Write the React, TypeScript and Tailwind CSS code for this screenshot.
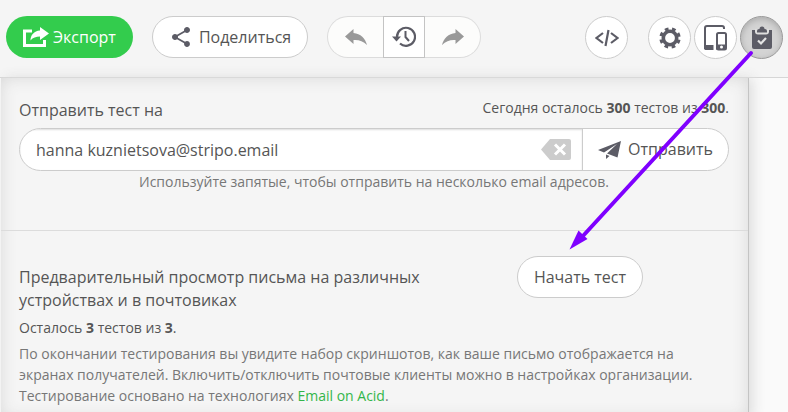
import { useState } from 'react';
import type { ReactNode } from 'react';
import { MdShare } from 'react-icons/md';

const ExportIcon = () => (
  <svg className="h-5 w-[26px] shrink-0" viewBox="0 0 26 20" fill="none">
    <path d="M9 4H1.500v14.500h20V13" stroke="currentColor" strokeWidth="3" />
    <path d="M17 0l9 6.500-9 6.500V9.500c-4 0-7 1-9.500 4C7.500 8 11 4 17 3.500z" fill="currentColor" />
  </svg>
);

const ArrowIcon = ({ className }: { className?: string }) => (
  <svg className={`h-4 w-[22px] ${className ?? ''}`} viewBox="0 0 22 16" fill="currentColor">
    <path d="M8.500 0L0 7.500 8.500 15v-4c5-.5 9.500 1 13.500 5C20.500 9.500 15.500 4.500 8.500 4z" />
  </svg>
);

const HistoryIcon = () => (
  <svg className="h-[22px] w-6" viewBox="0 0 24 22" fill="none" stroke="#5c5c66">
    <path d="M5 11a9 9 0 1 1 3 6.500" strokeWidth="2.200" />
    <path d="M0 10.500h9L4.500 15.500z" fill="#5c5c66" stroke="none" />
    <path d="M13.500 5v6l3.500 4" strokeWidth="2" />
  </svg>
);

const CodeIcon = () => (
  <svg className="h-[18px] w-6" viewBox="0 0 24 18" fill="none" stroke="currentColor" strokeWidth="2.200">
    <path d="M8 4L1.500 9 8 14M16 4l6.500 5L16 14M13.500 1l-3 16" />
  </svg>
);

const GearIcon = () => (
  <svg className="h-[22px] w-[22px]" viewBox="0 0 22 22" fill="none" stroke="currentColor">
    <circle cx="11" cy="11" r="6.700" strokeWidth="3.600" />
    <circle cx="11" cy="11" r="9" strokeWidth="3.400" strokeDasharray="3.600 3.469" strokeDashoffset="-1.730" />
  </svg>
);

const DevicesIcon = () => (
  <svg className="h-[26px] w-6" viewBox="0 0 24 26" fill="none">
    <path d="M20 4V3a2 2 0 0 0-2-2H3a2 2 0 0 0-2 2v21" stroke="currentColor" strokeWidth="2" />
    <path d="M1 20h8.500v5H2.500A2 2 0 0 1 0 23z" fill="currentColor" />
    <rect x="13" y="8" width="9" height="16.500" rx="1.500" stroke="currentColor" strokeWidth="2" />
    <path d="M12 19.500h10v5H12z" fill="currentColor" />
    <circle cx="17.500" cy="22" r="1.500" fill="white" />
  </svg>
);

const ClipboardIcon = () => (
  <svg className="h-6 w-[22px]" viewBox="0 0 22 24" fill="none">
    <path d="M1 4h20v17a2 2 0 0 1-2 2H3a2 2 0 0 1-2-2z" fill="currentColor" />
    <path d="M4 3h14v2.500a3 3 0 0 1-3 3H7a3 3 0 0 1-3-3z" fill="#dedede" />
    <path d="M6 6.500V5a2 2 0 0 1 2-2h.5A2.500 2.500 0 0 1 11 .5 2.500 2.500 0 0 1 13.500 3h.5a2 2 0 0 1 2 2v1.500z" fill="currentColor" />
    <path d="M7 14.500l3 3 5-5.500" stroke="#e4e4e4" strokeWidth="2.200" />
  </svg>
);

const PlaneIcon = () => (
  <svg className="h-[18px] w-6 shrink-0" viewBox="0 0 24 18" fill="currentColor">
    <path d="M23 0L0 9l6 2.500L19 3 9 12.500l10.500 4z" />
    <path d="M8 13.500V18l3.500-3z" />
  </svg>
);

const ClearIcon = () => (
  <svg className="h-[21px] w-[30px]" viewBox="0 0 30 21" fill="none">
    <path d="M9 0h19a2 2 0 0 1 2 2v17a2 2 0 0 1-2 2H9L0 10.500z" fill="#cccccc" />
    <path d="M14 5.500l10 10m0-10l-10 10" stroke="white" strokeWidth="3" />
  </svg>
);

interface RoundButtonProps {
  label: string;
  active?: boolean;
  children: ReactNode;
}

function RoundButton({ label, active, children }: RoundButtonProps) {
  return (
    <button
      type="button"
      aria-label={label}
      className={`flex h-[43px] w-[43px] items-center justify-center rounded-full border ${
        active ? 'border-[#999999] bg-[#d4d4d4] shadow-[inset_0_2px_6px_#aaaaaa]' : 'border-[#cccccc] bg-white'
      }`}
    >
      {children}
    </button>
  );
}

function Toolbar() {
  return (
    <header className="flex items-start justify-between border-b border-[#d6d6d6] bg-[#f5f5f5] pt-4 pr-[5px] pb-[18px] pl-[6px]">
      <div className="flex items-center gap-[19px]">
        <button type="button" className="flex h-[42px] items-center gap-1 rounded-full bg-[#33cc4d] px-[17px] text-white">
          <ExportIcon />
          Экспорт
        </button>
        <button type="button" className="flex h-[42px] items-center gap-[6px] rounded-full border border-[#cccccc] bg-white px-4">
          <MdShare className="h-6 w-6 text-[#5c5c66]" />
          Поделиться
        </button>
        <div className="flex h-[42px]">
          <button type="button" aria-label="Отменить" disabled className="flex w-14 items-center justify-center rounded-l-full border border-r-0 border-[#dcdcdc] bg-[#fcfcfb] text-[#999999]">
            <ArrowIcon />
          </button>
          <button type="button" aria-label="История" className="flex w-[42px] items-center justify-center border border-[#c4c4c4] bg-white">
            <HistoryIcon />
          </button>
          <button type="button" aria-label="Повторить" disabled className="flex w-14 items-center justify-center rounded-r-full border border-l-0 border-[#dcdcdc] bg-[#fcfcfb] text-[#999999]">
            <ArrowIcon className="-scale-x-100" />
          </button>
        </div>
      </div>
      <div className="flex items-center gap-5 text-[#5c5c66]">
        <RoundButton label="Код">
          <CodeIcon />
        </RoundButton>
        <div className="flex gap-[3px]">
          <RoundButton label="Настройки">
            <GearIcon />
          </RoundButton>
          <RoundButton label="Предпросмотр">
            <DevicesIcon />
          </RoundButton>
          <RoundButton label="Тестирование" active>
            <ClipboardIcon />
          </RoundButton>
        </div>
      </div>
    </header>
  );
}

function SendTestForm() {
  const [email, setEmail] = useState('hanna kuznietsova@stripo.email');

  return (
    <form className="border-b border-[#dcdcdc] pt-5 pr-[19px] pb-[37px] pl-[18px]" onSubmit={(e) => e.preventDefault()}>
      <div className="flex items-start justify-between pb-[6px]">
        <label htmlFor="test-email" className="pt-[1px]">Отправить тест на</label>
        <p className="text-sm leading-[20px]">
          Сегодня осталось <b>300</b> тестов из <b>300</b>.
        </p>
      </div>
      <div className="flex h-[43px] overflow-hidden rounded-full border border-[#cccccc] bg-white">
        <div className="flex flex-1 items-center pr-[11px] shadow-[inset_0_1px_2px_#dddddd]">
          <input
            id="test-email"
            value={email}
            onChange={(e) => setEmail(e.target.value)}
            className="h-full min-w-0 flex-1 pl-4 outline-none"
          />
          <button type="button" aria-label="Очистить" onClick={() => setEmail('')}>
            <ClearIcon />
          </button>
        </div>
        <button type="submit" className="flex items-center gap-[6px] border-l border-[#cccccc] px-[15px]">
          <span className="text-[#5c5c66]">
            <PlaneIcon />
          </span>
          Отправить
        </button>
      </div>
      <p className="text-center text-sm leading-[22px] text-[#777777]">
        Используйте запятые, чтобы отправить на несколько email адресов.
      </p>
    </form>
  );
}

function PreviewTest() {
  return (
    <section className="px-[18px] pt-[25px] pb-3">
      <div className="flex items-start justify-between">
        <div className="w-[440px] pt-[10px]">
          <h2>Предварительный просмотр письма на различных устройствах и в почтовиках</h2>
          <p className="pt-[5px] text-sm leading-[22px]">
            Осталось <b>3</b> тестов из <b>3</b>.
          </p>
        </div>
        <button type="button" className="mr-[87px] h-[42px] rounded-full border border-[#cccccc] bg-white px-4">
          Начать тест
        </button>
      </div>
      <p className="pt-1 text-sm leading-[21px] text-[#777777]">
        По окончании тестирования вы увидите набор скриншотов, как ваше письмо отображается на экранах получателей. Включить/отключить почтовые клиенты можно в настройках организации. Тестирование основано на технологиях{' '}
        <a href="#email-on-acid" className="text-[#33b54a]">Email on Acid</a>.
      </p>
    </section>
  );
}

export default function App() {
  return (
    <div className="relative min-h-screen overflow-hidden bg-[#fafafa] font-['Open_Sans','Noto_Sans',sans-serif] text-base leading-[23px] text-[#555555]">
      <Toolbar />
      <main className="mr-[39px] ml-px border-r border-[#c4c4c4] bg-[#f5f5f5] shadow-[inset_0_0_16px_#d8d8d8,4px_0_12px_#dddddd]">
        <SendTestForm />
        <PreviewTest />
      </main>
      {/* Pointer from the testing button to the start button */}
      <svg className="pointer-events-none absolute top-0 right-0 h-[260px] w-[238px]" viewBox="550 0 238 260">
        <path d="M751 53L582 237" stroke="#7f00ff" strokeWidth="4" strokeLinecap="round" />
        <path d="M569.500 249.500l9-19 9 8.500z" fill="#7f00ff" />
      </svg>
    </div>
  );
}
